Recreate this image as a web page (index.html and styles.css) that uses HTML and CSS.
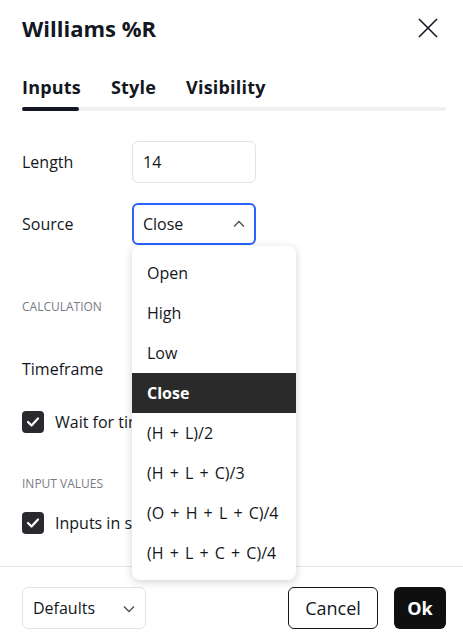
FILE: index.html
```html
<!DOCTYPE html>
<html>
<head>
<meta charset="utf-8">
<link rel="stylesheet" href="styles.css">
</head>
<body>
<div class="dialog">
  <div class="header">
    <div class="title">Williams %R</div>
    <svg class="close" width="20" height="20" viewBox="0 0 20 20"><path d="M1 1 L19 19 M19 1 L1 19" stroke="#131722" stroke-width="1.6" fill="none"/></svg>
  </div>
  <div class="tabs">
    <div class="tab active">Inputs</div>
    <div class="tab">Style</div>
    <div class="tab">Visibility</div>
  </div>
  <div class="track"><div class="track-active"></div></div>
  <div class="content">
    <div class="row">
      <div class="label">Length</div>
      <div class="field">14</div>
    </div>
    <div class="row r-source">
      <div class="label">Source</div>
      <div class="field focus">Close
        <svg class="chev" width="12" height="8" viewBox="0 0 12 8"><path d="M1 6.5 L6 1.5 L11 6.5" stroke="#555" stroke-width="1.5" fill="none"/></svg>
      </div>
    </div>
    <div class="section s-calc">CALCULATION</div>
    <div class="row r-tf">
      <div class="label">Timeframe</div>
    </div>
    <div class="check c-wait">
      <span class="box"><svg width="14" height="12" viewBox="0 0 14 12"><path d="M2 6 L5.5 9.5 L12 2.5" stroke="#fff" stroke-width="2.2" fill="none" stroke-linecap="round" stroke-linejoin="round"/></svg></span>
      <span class="clabel">Wait for timeframe closes</span>
    </div>
    <div class="section s-input">INPUT VALUES</div>
    <div class="check c-inputs">
      <span class="box"><svg width="14" height="12" viewBox="0 0 14 12"><path d="M2 6 L5.5 9.5 L12 2.5" stroke="#fff" stroke-width="2.2" fill="none" stroke-linecap="round" stroke-linejoin="round"/></svg></span>
      <span class="clabel">Inputs in status line</span>
    </div>
  </div>
  <div class="footer">
    <div class="defaults">Defaults
      <svg class="chev2" width="12" height="8" viewBox="0 0 12 8"><path d="M1 1.5 L6 6.5 L11 1.5" stroke="#555" stroke-width="1.5" fill="none"/></svg>
    </div>
    <div class="spacer"></div>
    <div class="btn cancel">Cancel</div>
    <div class="btn ok">Ok</div>
  </div>
  <div class="menu">
    <div class="item">Open</div>
    <div class="item">High</div>
    <div class="item">Low</div>
    <div class="item sel">Close</div>
    <div class="item">(H + L)/2</div>
    <div class="item">(H + L + C)/3</div>
    <div class="item">(O + H + L + C)/4</div>
    <div class="item">(H + L + C + C)/4</div>
  </div>
</div>
</body>
</html>
```
FILE: styles.css
```css
* { box-sizing: border-box; }
html, body { margin: 0; padding: 0; background: #fff; }
body {
  font-family: "Open Sans", "DejaVu Sans", sans-serif;
  color: #131722;
  font-size: 16px;
}
.dialog {
  position: relative;
  width: 463px;
  height: 643px;
  overflow: hidden;
}
.header {
  height: 56px;
  display: flex;
  align-items: center;
  padding: 0 25px 0 22px;
}
.title {
  flex: 1;
  font-size: 22px;
  font-weight: 700;
}
.close { display: block; }
.tabs {
  display: flex;
  gap: 30px;
  padding: 19px 22px 0;
}
.tab {
  font-size: 18px;
  font-weight: 700;
  line-height: 24px;
  letter-spacing: 0.2px;
}
.track {
  margin: 8px 17px 0 22px;
  height: 4px;
  background: #f0f0f0;
  border-radius: 2px;
}
.track-active {
  width: 57px;
  height: 4px;
  background: #131722;
  border-radius: 2px;
}
.content {
  padding: 30px 22px 0;
  height: 455px;
}
.row {
  display: grid;
  grid-template-columns: 110px 124px;
  align-items: center;
  height: 42px;
}
.r-source { margin-top: 20px; }
.field {
  height: 42px;
  border: 1px solid #e0e3eb;
  border-radius: 6px;
  padding: 0 10px;
  display: flex;
  align-items: center;
  position: relative;
}
.field.focus {
  border: 2px solid #2962ff;
  padding: 0 9px;
}
.chev {
  position: absolute;
  right: 9px;
  top: 15px;
}
.section {
  font-size: 12px;
  color: #787b86;
  line-height: 16px;
  text-transform: uppercase;
}
.s-calc { margin-top: 54px; }
.r-tf { margin-top: 33px; }
.check {
  display: flex;
  align-items: center;
  gap: 11px;
  height: 22px;
  white-space: nowrap;
}
.c-wait { margin-top: 21px; }
.s-input { margin-top: 43px; }
.c-inputs { margin-top: 20px; }
.box {
  width: 22px;
  height: 22px;
  background: #2a2a2e;
  border-radius: 4px;
  display: flex;
  align-items: center;
  justify-content: center;
  flex: none;
}
.box svg { display: block; }
.footer {
  border-top: 1px solid #e0e3eb;
  display: flex;
  align-items: center;
  padding: 20px 17px 0 22px;
  gap: 16px;
}
.defaults {
  width: 124px;
  height: 42px;
  border: 1px solid #e0e3eb;
  border-radius: 6px;
  padding: 0 10px;
  display: flex;
  align-items: center;
  position: relative;
}
.chev2 { position: absolute; right: 10px; top: 17px; }
.spacer { flex: 1; }
.btn {
  height: 42px;
  border-radius: 6px;
  display: flex;
  align-items: center;
  justify-content: center;
  font-size: 18px;
}
.cancel {
  width: 90px;
  border: 1px solid #131722;
}
.ok {
  width: 52px;
  background: #0f0f0f;
  color: #fff;
  font-weight: 700;
}
.menu {
  position: absolute;
  left: 132px;
  top: 246px;
  width: 164px;
  padding: 7px 0;
  background: #fff;
  border-radius: 8px;
  box-shadow: 0 2px 8px rgba(0,0,0,0.18);
}
.item {
  height: 40px;
  line-height: 40px;
  padding-left: 15px;
  white-space: nowrap;
  word-spacing: 2px;
}
.item.sel {
  background: #2a2a2a;
  color: #fff;
  font-weight: 700;
}
```
